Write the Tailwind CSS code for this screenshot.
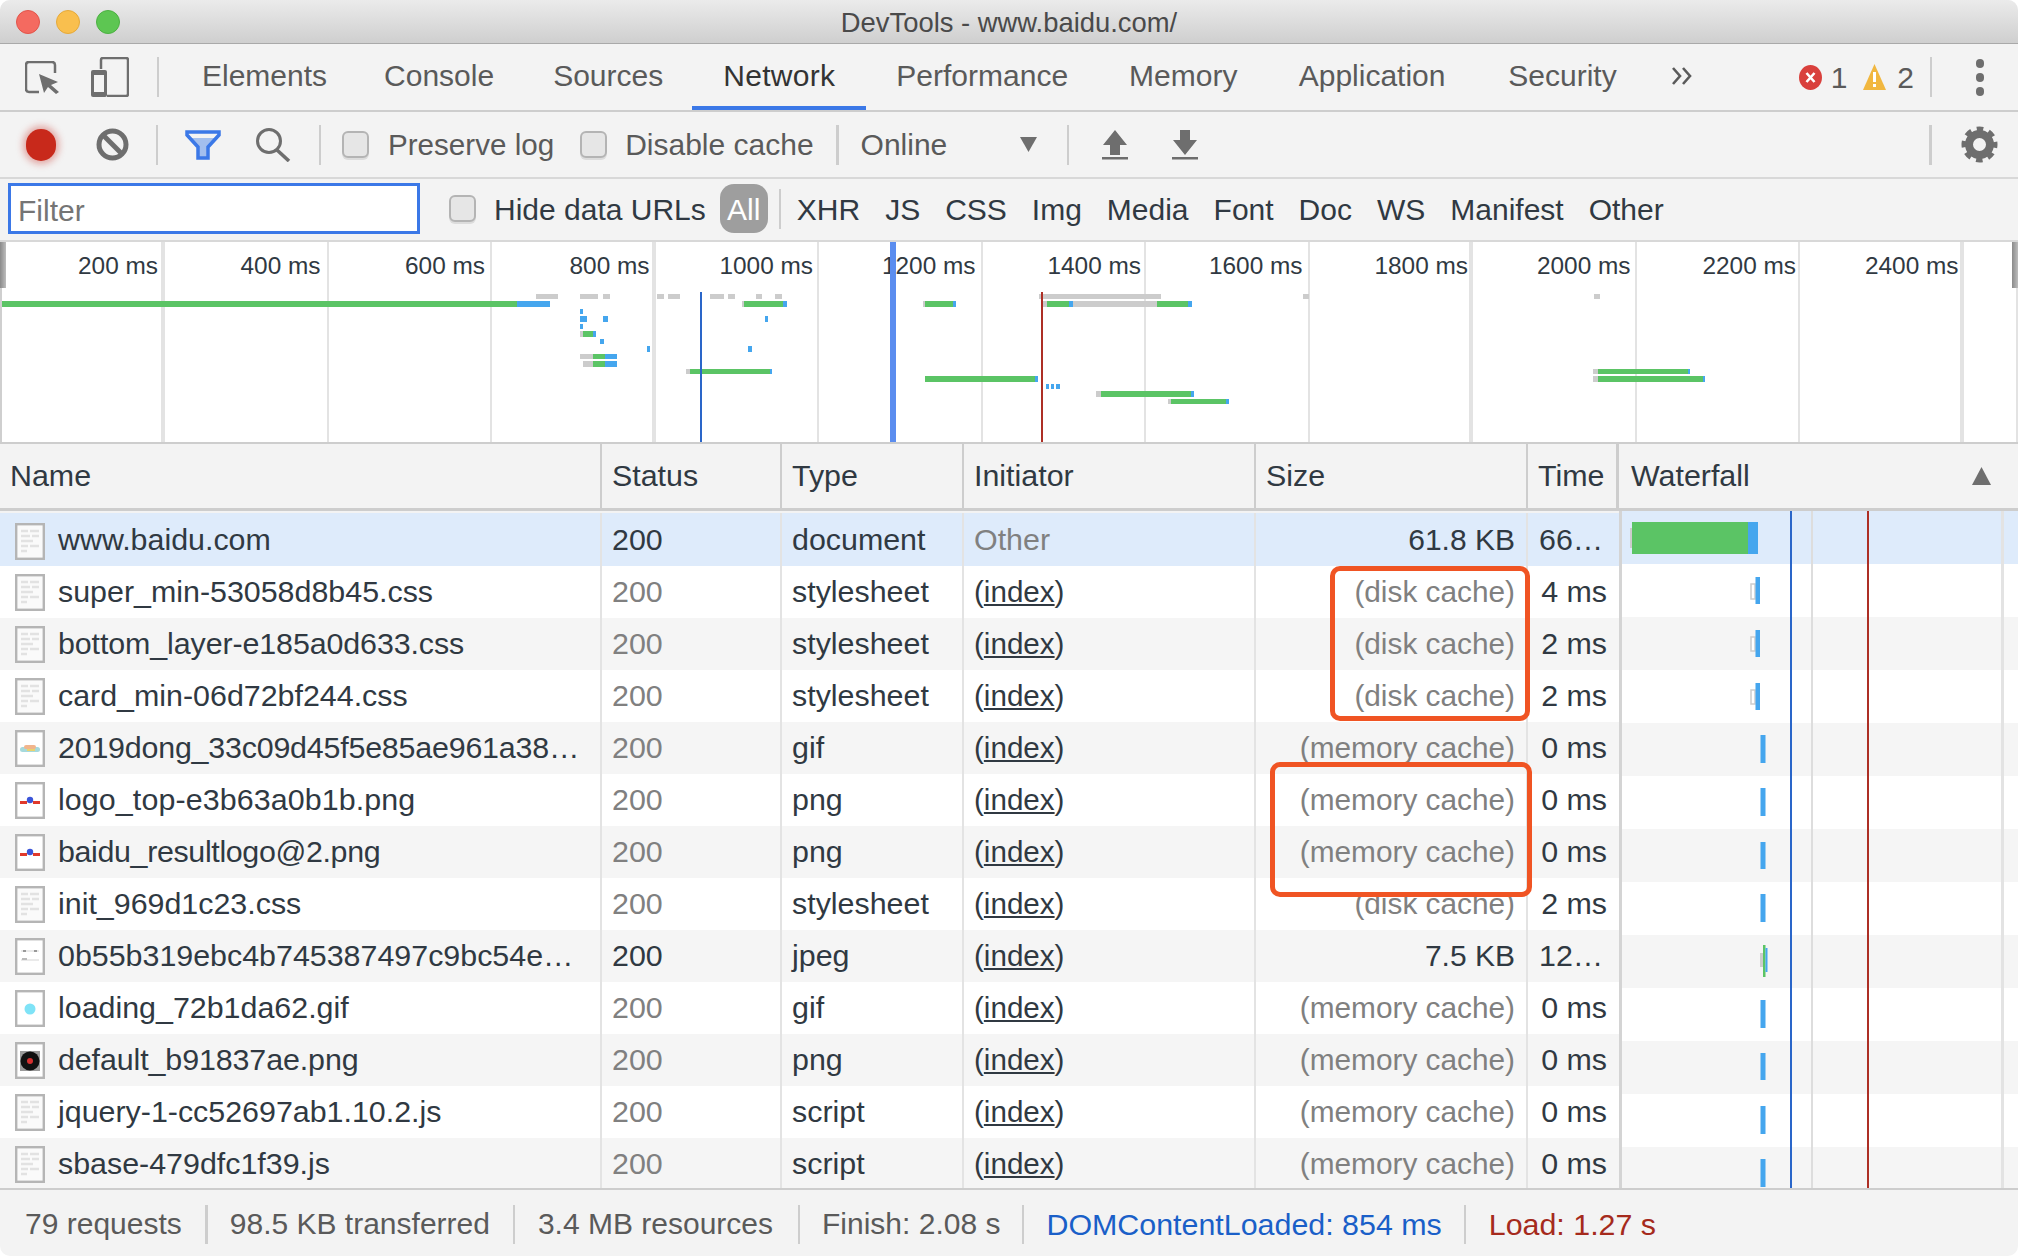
<!DOCTYPE html>
<html lang="en">
<head>
    <meta charset="UTF-8">
    <title>DevTools - www.baidu.com/</title>
    <script src="https://cdn.jsdelivr.net/npm/@tailwindcss/browser@4"></script>
</head>
<body class="bg-white">
<div class="relative w-[2018px] h-[1256px] flex flex-col overflow-hidden rounded-[10px] bg-[#f3f3f3] font-['Liberation_Sans',Arial,sans-serif] text-[30.4px] leading-none text-[#303942]">

    <!-- title bar -->
    <header class="relative h-[44px] shrink-0 flex items-center justify-center pt-[2px] bg-gradient-to-b from-[#ebebeb] to-[#cfcfcf] border-b border-[#a9a9a9]">
        <div class="absolute left-[16px] top-[10px] flex gap-[16px]">
            <div class="w-[24px] h-[24px] rounded-full bg-[#f46a60] border border-[#e2544a]"></div>
            <div class="w-[24px] h-[24px] rounded-full bg-[#f9bf4e] border border-[#e5a93a]"></div>
            <div class="w-[24px] h-[24px] rounded-full bg-[#5dc652] border border-[#4cb042]"></div>
        </div>
        <h1 class="text-[27.4px] text-[#4a4a4a]">DevTools - www.baidu.com/</h1>
    </header>

    <!-- panel tabs -->
    <nav class="h-[68px] shrink-0 flex items-center border-b-2 border-[#cdcdcd] text-[30px] text-[#5a5a5a]">
        <svg class="ml-[25px]" width="35" height="33" viewBox="0 0 35 33">
            <path d="M14 31H4Q1 31 1 28V4Q1 1 4 1H27Q30 1 30 4V12" fill="none" stroke="#6e6e6e" stroke-width="2.5"/>
            <path d="M14 13L33 21 26 24 34 31 31 33 23 26 19 32Z" fill="#6e6e6e"/>
        </svg>
        <svg class="ml-[31px]" width="38" height="40" viewBox="0 0 38 40">
            <path d="M10 12V3Q10 1 12 1H35Q37 1 37 3V37Q37 39 35 39H16" fill="none" stroke="#6e6e6e" stroke-width="2.5"/>
            <rect x="0" y="13" width="16" height="27" rx="2" fill="#6e6e6e"/>
            <rect x="3" y="18" width="10" height="17" fill="#f3f3f3"/>
        </svg>
        <div class="ml-[28px] w-[2px] h-[40px] bg-[#cdcdcd]"></div>
        <div class="ml-[14px] h-full flex">
            <div class="pl-[29px] pr-[28px] pb-[2px] flex items-center">Elements</div>
            <div class="pl-[29px] pr-[30px] pb-[2px] flex items-center">Console</div>
            <div class="pl-[29px] pr-[29px] pb-[2px] flex items-center">Sources</div>
            <div class="pl-[31px] pr-[31px] pt-[2px] flex items-center tracking-[0.3px] text-[#333] border-b-[4px] border-[#3b78e7]">Network</div>
            <div class="pl-[30px] pr-[31px] pb-[2px] flex items-center">Performance</div>
            <div class="pl-[30px] pr-[31.3px] pb-[2px] flex items-center">Memory</div>
            <div class="pl-[30px] pr-[33.8px] pb-[2px] flex items-center">Application</div>
            <div class="px-[29px] pb-[2px] flex items-center">Security</div>
        </div>
        <svg class="ml-[25px] mb-[2px]" width="21" height="20" viewBox="0 0 21 20">
            <path d="M2 2L9 10 2 18M12 2L19 10 12 18" fill="none" stroke="#5a5a5a" stroke-width="2.6"/>
        </svg>
        <div class="ml-auto flex items-center">
            <svg width="23" height="25" viewBox="0 0 23 25">
                <ellipse cx="11.5" cy="12.5" rx="11.5" ry="12.5" fill="#d9403c"/>
                <path d="M7.5 8L15.5 17M15.5 8L7.5 17" stroke="#fff" stroke-width="2.6"/>
            </svg>
            <span class="ml-[9px] pt-[2px]">1</span>
            <svg class="ml-[16px]" width="23" height="26" viewBox="0 0 23 26">
                <path d="M11.5 0L23 26H0Z" fill="#f1b73f"/>
                <rect x="10" y="8" width="3" height="10" fill="#fff"/>
                <rect x="10" y="20" width="3" height="3" fill="#fff"/>
            </svg>
            <span class="ml-[11px] pt-[2px]">2</span>
            <div class="ml-[16px] w-[2px] h-[40px] bg-[#cdcdcd]"></div>
            <div class="ml-[44px] mr-[34px] flex flex-col gap-[5px]">
                <div class="w-[8px] h-[9px] rounded-full bg-[#6e6e6e]"></div>
                <div class="w-[8px] h-[9px] rounded-full bg-[#6e6e6e]"></div>
                <div class="w-[8px] h-[9px] rounded-full bg-[#6e6e6e]"></div>
            </div>
        </div>
    </nav>

    <!-- network toolbar -->
    <div class="h-[67px] shrink-0 flex items-center border-b-2 border-[#d8d8d8] text-[30px] text-[#5a5a5a]">
        <div class="ml-[26px] w-[30px] h-[32px] rounded-full bg-[#c8291b] shadow-[0_0_7px_3px_rgba(200,50,40,0.4)]"></div>
        <svg class="ml-[40px]" width="33" height="33" viewBox="0 0 33 33">
            <circle cx="16.5" cy="16.5" r="13.5" fill="none" stroke="#6e6e6e" stroke-width="5"/>
            <path d="M7 7L26 26" stroke="#6e6e6e" stroke-width="5"/>
        </svg>
        <div class="ml-[27px] w-[2px] h-[40px] bg-[#cdcdcd]"></div>
        <svg class="ml-[27px]" width="36" height="30" viewBox="0 0 36 30">
            <path d="M6 8H30L22 18V27H14V18Z" fill="#a3bfee"/>
            <path d="M2 2H34V5L23 17V28H13V17L2 5Z" fill="none" stroke="#3b78e7" stroke-width="3.5"/>
        </svg>
        <svg class="ml-[34px]" width="36" height="34" viewBox="0 0 36 34">
            <circle cx="14" cy="13" r="11.5" fill="none" stroke="#6e6e6e" stroke-width="3"/>
            <path d="M22 22L34 33" stroke="#6e6e6e" stroke-width="3.6"/>
        </svg>
        <div class="ml-[28px] w-[2px] h-[40px] bg-[#cdcdcd]"></div>
        <div class="ml-[21px] w-[27px] h-[27px] rounded-[6px] bg-[#e6e6e6] border-2 border-[#b4b4b4] shadow-[0_2px_0_#dcdcdc]"></div>
        <span class="ml-[19px] text-[29.6px]">Preserve log</span>
        <div class="ml-[26px] w-[27px] h-[27px] rounded-[6px] bg-[#e6e6e6] border-2 border-[#b4b4b4] shadow-[0_2px_0_#dcdcdc]"></div>
        <span class="ml-[18px]">Disable cache</span>
        <div class="ml-[22px] w-[3px] h-[40px] bg-[#cdcdcd]"></div>
        <span class="ml-[22px]">Online</span>
        <svg class="ml-[73px]" width="17" height="15" viewBox="0 0 17 15"><path d="M0 0H17L8.5 15Z" fill="#6e6e6e"/></svg>
        <div class="ml-[30px] w-[2px] h-[40px] bg-[#cdcdcd]"></div>
        <svg class="ml-[33px]" width="26" height="30" viewBox="0 0 26 30">
            <path d="M13 0L25 15H18V25H8V15H1Z" fill="#6e6e6e"/>
            <rect x="0" y="27" width="26" height="2.5" fill="#6e6e6e"/>
        </svg>
        <svg class="ml-[44px]" width="26" height="30" viewBox="0 0 26 30">
            <path d="M8 0H18V10H25L13 25 1 10H8Z" fill="#6e6e6e"/>
            <rect x="0" y="27" width="26" height="2.5" fill="#6e6e6e"/>
        </svg>
        <div class="ml-auto w-[3px] h-[40px] bg-[#cdcdcd]"></div>
        <svg class="ml-[29px] mr-[20px]" width="37" height="37" viewBox="0 0 37 37">
            <circle cx="18.5" cy="18.5" r="10.5" fill="none" stroke="#6e6e6e" stroke-width="8"/>
            <circle cx="18.5" cy="18.5" r="15.5" fill="none" stroke="#6e6e6e" stroke-width="5" stroke-dasharray="6.5 5.67" stroke-dashoffset="3.2"/>
        </svg>
    </div>

    <!-- filter bar -->
    <div class="h-[63px] shrink-0 flex items-center border-b-2 border-[#d8d8d8] pb-[2px] text-[30px]">
        <div class="ml-[8px] w-[412px] h-[51px] bg-white border-[3px] border-[#3b78e7] flex items-center pl-[7px] pt-[5px] text-[#757575]">Filter</div>
        <div class="ml-[29px] w-[27px] h-[27px] rounded-[6px] bg-[#e6e6e6] border-2 border-[#b4b4b4] shadow-[0_2px_0_#dcdcdc]"></div>
        <span class="ml-[18px] pt-[2px]">Hide data URLs</span>
        <div class="ml-[14px] w-[48px] h-[49px] rounded-[14px] bg-[#9e9e9e] text-white flex items-center justify-center pt-[2px]">All</div>
        <div class="ml-[11px] w-[2px] h-[40px] bg-[#cdcdcd]"></div>
        <div class="ml-[16px] flex gap-[25px] pt-[2px]">
            <span>XHR</span><span>JS</span><span>CSS</span><span>Img</span><span>Media</span><span>Font</span><span>Doc</span><span>WS</span><span>Manifest</span><span>Other</span>
        </div>
    </div>

    <!-- timeline overview -->
    <section class="relative h-[202px] shrink-0 bg-white border-b-2 border-[#cdcdcd]">
        <div class="h-full flex text-[24.4px] text-[#303942]">
            <div class="w-[165px] h-full border-r-4 border-[#e3e3e3] pt-[12px] pr-[3px] text-right">200 ms</div>
            <div class="w-[163.5px] h-full border-r-2 border-[#e3e3e3] pt-[12px] pr-[6px] text-right">400 ms</div>
            <div class="w-[163.5px] h-full border-r-2 border-[#e3e3e3] pt-[12px] pr-[5px] text-right">600 ms</div>
            <div class="w-[163.5px] h-full border-r-4 border-[#e3e3e3] pt-[12px] pr-[2px] text-right">800 ms</div>
            <div class="w-[163.5px] h-full border-r-2 border-[#e3e3e3] pt-[12px] pr-[4px] text-right">1000 ms</div>
            <div class="w-[163.5px] h-full border-r-2 border-[#e3e3e3] pt-[12px] pr-[5px] text-right">1200 ms</div>
            <div class="w-[163.5px] h-full border-r-2 border-[#e3e3e3] pt-[12px] pr-[3px] text-right">1400 ms</div>
            <div class="w-[163.5px] h-full border-r-2 border-[#e3e3e3] pt-[12px] pr-[5px] text-right">1600 ms</div>
            <div class="w-[163.5px] h-full border-r-4 border-[#e3e3e3] pt-[12px] pr-[1px] text-right">1800 ms</div>
            <div class="w-[163.5px] h-full border-r-2 border-[#e3e3e3] pt-[12px] pr-[4px] text-right">2000 ms</div>
            <div class="w-[163.5px] h-full border-r-2 border-[#e3e3e3] pt-[12px] pr-[2px] text-right">2200 ms</div>
            <div class="w-[163.5px] h-full border-r-4 border-[#e3e3e3] pt-[12px] pr-[1px] text-right">2400 ms</div>
        </div>
        <svg class="absolute left-0 top-0" width="2018" height="200" viewBox="0 242 2018 200">
            <defs><linearGradient id="handle" x1="0" x2="1" y1="0" y2="0"><stop offset="0" stop-color="#8a8a8a"/><stop offset="1" stop-color="#bdbdbd"/></linearGradient></defs>
            <rect x="0" y="242" width="2" height="200" fill="#cfcfcf"/>
            <rect x="0" y="242" width="6" height="46" fill="url(#handle)"/>
            <rect x="2012" y="242" width="6" height="46" fill="url(#handle)"/>
            <rect x="2016" y="288" width="2" height="154" fill="#e3e3e3"/>
            <g fill="#cccccc">
                <rect x="536" y="294" width="22" height="5"/><rect x="580" y="294" width="18" height="5"/><rect x="603" y="294" width="7" height="5"/>
                <rect x="657" y="294" width="7" height="5"/><rect x="668" y="294" width="12" height="5"/><rect x="710" y="294" width="14" height="5"/>
                <rect x="728" y="294" width="7" height="5"/><rect x="756" y="294" width="6" height="5"/><rect x="775" y="294" width="7" height="5"/>
                <rect x="1039" y="294" width="122" height="5"/><rect x="1303" y="294" width="6" height="5"/><rect x="1594" y="294" width="6" height="5"/>
                <rect x="742" y="301" width="2" height="6"/><rect x="923" y="301" width="2" height="6"/><rect x="1042" y="301" width="5" height="6"/><rect x="1073" y="301" width="84" height="6"/>
                <rect x="580" y="331" width="3" height="6"/>
                <rect x="580" y="354" width="13" height="5"/><rect x="583" y="361" width="10" height="6"/>
                <rect x="686" y="369" width="4" height="5"/><rect x="1593" y="369" width="5" height="5"/><rect x="1593" y="376" width="5" height="6"/>
                <rect x="1096" y="391" width="5" height="6"/><rect x="1168" y="399" width="3" height="5"/>
            </g>
            <g fill="#5bc465">
                <rect x="2" y="301" width="515" height="6"/><rect x="744" y="301" width="39" height="6"/><rect x="925" y="301" width="28" height="6"/>
                <rect x="1047" y="301" width="22" height="6"/><rect x="1157" y="301" width="31" height="6"/>
                <rect x="583" y="331" width="10" height="6"/><rect x="593" y="354" width="12" height="5"/><rect x="593" y="361" width="12" height="6"/>
                <rect x="690" y="369" width="80" height="5"/><rect x="1598" y="369" width="90" height="5"/>
                <rect x="925" y="376" width="110" height="6"/><rect x="1598" y="376" width="105" height="6"/>
                <rect x="1101" y="391" width="90" height="6"/><rect x="1171" y="399" width="55" height="5"/>
            </g>
            <g fill="#45a6ee">
                <rect x="517" y="301" width="33" height="6"/><rect x="783" y="301" width="4" height="6"/><rect x="953" y="301" width="3" height="6"/>
                <rect x="1069" y="301" width="4" height="6"/><rect x="1188" y="301" width="4" height="6"/>
                <rect x="580" y="309" width="3" height="5"/>
                <rect x="580" y="316" width="7" height="6"/><rect x="603" y="316" width="5" height="6"/><rect x="765" y="316" width="3" height="6"/>
                <rect x="580" y="324" width="3" height="5"/><rect x="593" y="331" width="3" height="6"/>
                <rect x="600" y="339" width="4" height="5"/><rect x="647" y="346" width="3" height="6"/><rect x="748" y="346" width="4" height="6"/>
                <rect x="605" y="354" width="12" height="5"/><rect x="605" y="361" width="12" height="6"/>
                <rect x="770" y="369" width="2" height="5"/><rect x="1688" y="369" width="2" height="5"/>
                <rect x="1035" y="376" width="3" height="6"/><rect x="1703" y="376" width="2" height="6"/>
                <rect x="1046" y="384" width="3" height="5"/><rect x="1051" y="384" width="3" height="5"/><rect x="1056" y="384" width="4" height="5"/>
                <rect x="1191" y="391" width="3" height="6"/><rect x="1226" y="399" width="3" height="5"/>
            </g>
            <rect x="700" y="292" width="2" height="150" fill="#2a66c9"/>
            <rect x="890" y="242" width="6" height="200" fill="#5b8def"/>
            <rect x="1041" y="292" width="2" height="150" fill="#ad2f25"/>
        </svg>
    </section>

    <!-- table header -->
    <div class="h-[67px] shrink-0 flex border-b-[3px] border-[#cdcdcd] [&>div]:pb-[2px]">
        <div class="w-[602px] h-full flex items-center pl-[10px] border-r-2 border-[#cdcdcd]">Name</div>
        <div class="w-[180px] h-full flex items-center pl-[10px] border-r-2 border-[#cdcdcd]">Status</div>
        <div class="w-[182px] h-full flex items-center pl-[10px] border-r-2 border-[#cdcdcd]">Type</div>
        <div class="w-[292px] h-full flex items-center pl-[10px] border-r-2 border-[#cdcdcd]">Initiator</div>
        <div class="w-[272px] h-full flex items-center pl-[10px] border-r-2 border-[#cdcdcd]">Size</div>
        <div class="w-[91px] h-full flex items-center pl-[10px] border-r-[3px] border-[#cdcdcd]">Time</div>
        <div class="flex-1 h-full flex items-center pl-[12px]">Waterfall</div>
        <svg class="self-center mr-[27px]" width="19" height="18" viewBox="0 0 19 18"><path d="M9.5 0L19 18H0Z" fill="#6e6e6e"/></svg>
    </div>

    <!-- requests -->
    <div class="h-[677px] shrink-0 flex overflow-hidden">
        <div class="w-[1619px] shrink-0 pt-[2px]">

            <div class="h-[53px] flex items-center bg-[#deebfb]">
                <div class="w-[602px] h-full flex items-center pl-[15px] gap-[13px] border-r-2 border-[#e3e3e3]">
                    <svg class="mt-[3px]" width="30" height="37" viewBox="0 0 30 37"><rect x="1.2" y="1.2" width="27.6" height="34.6" fill="#fafafa" stroke="#b5b5b5" stroke-width="2.4"/><path d="M6 8h7M15 8h9M6 13h9M17 13h7M6 18h12M6 23h7M15 23h9M6 28h6" stroke="#e2e2e2" stroke-width="2.4"/></svg>
                    <span>www.baidu.com</span>
                </div>
                <div class="w-[180px] h-full flex items-center pl-[10px] border-r-2 border-[#e3e3e3]">200</div>
                <div class="w-[182px] h-full flex items-center pl-[10px] border-r-2 border-[#e3e3e3]">document</div>
                <div class="w-[292px] h-full flex items-center pl-[10px] border-r-2 border-[#e3e3e3] text-[#808080]">Other</div>
                <div class="w-[272px] h-full flex items-center justify-end pr-[11px] border-r-2 border-[#e3e3e3] text-[30px]">61.8 KB</div>
                <div class="w-[91px] h-full flex items-center pl-[11px]">66…</div>
            </div>

            <div class="h-[52px] flex items-center bg-white [&>div]:pb-[2px]">
                <div class="w-[602px] h-full flex items-center pl-[15px] gap-[13px] border-r-2 border-[#e3e3e3]">
                    <svg class="mt-[3px]" width="30" height="37" viewBox="0 0 30 37"><rect x="1.2" y="1.2" width="27.6" height="34.6" fill="#fafafa" stroke="#b5b5b5" stroke-width="2.4"/><path d="M6 8h7M15 8h9M6 13h9M17 13h7M6 18h12M6 23h7M15 23h9M6 28h6" stroke="#e2e2e2" stroke-width="2.4"/></svg>
                    <span>super_min-53058d8b45.css</span>
                </div>
                <div class="w-[180px] h-full flex items-center pl-[10px] border-r-2 border-[#e3e3e3] text-[#808080]">200</div>
                <div class="w-[182px] h-full flex items-center pl-[10px] border-r-2 border-[#e3e3e3]">stylesheet</div>
                <div class="w-[292px] h-full flex items-center pl-[10px] pt-[2px] border-r-2 border-[#e3e3e3] text-[29.6px]">(<span class="underline">index</span>)</div>
                <div class="w-[272px] h-full flex items-center justify-end pr-[11px] pt-[2px] border-r-2 border-[#e3e3e3] text-[29.8px] text-[#808080]">(disk cache)</div>
                <div class="w-[91px] h-full flex items-center justify-end pr-[12px]">4 ms</div>
            </div>

            <div class="h-[52px] flex items-center bg-[#f5f5f5] [&>div]:pb-[2px]">
                <div class="w-[602px] h-full flex items-center pl-[15px] gap-[13px] border-r-2 border-[#e3e3e3]">
                    <svg class="mt-[3px]" width="30" height="37" viewBox="0 0 30 37"><rect x="1.2" y="1.2" width="27.6" height="34.6" fill="#fafafa" stroke="#b5b5b5" stroke-width="2.4"/><path d="M6 8h7M15 8h9M6 13h9M17 13h7M6 18h12M6 23h7M15 23h9M6 28h6" stroke="#e2e2e2" stroke-width="2.4"/></svg>
                    <span class="tracking-[-0.1px]">bottom_layer-e185a0d633.css</span>
                </div>
                <div class="w-[180px] h-full flex items-center pl-[10px] border-r-2 border-[#e3e3e3] text-[#808080]">200</div>
                <div class="w-[182px] h-full flex items-center pl-[10px] border-r-2 border-[#e3e3e3]">stylesheet</div>
                <div class="w-[292px] h-full flex items-center pl-[10px] pt-[2px] border-r-2 border-[#e3e3e3] text-[29.6px]">(<span class="underline">index</span>)</div>
                <div class="w-[272px] h-full flex items-center justify-end pr-[11px] pt-[2px] border-r-2 border-[#e3e3e3] text-[29.8px] text-[#808080]">(disk cache)</div>
                <div class="w-[91px] h-full flex items-center justify-end pr-[12px]">2 ms</div>
            </div>

            <div class="h-[52px] flex items-center bg-white [&>div]:pb-[2px]">
                <div class="w-[602px] h-full flex items-center pl-[15px] gap-[13px] border-r-2 border-[#e3e3e3]">
                    <svg class="mt-[3px]" width="30" height="37" viewBox="0 0 30 37"><rect x="1.2" y="1.2" width="27.6" height="34.6" fill="#fafafa" stroke="#b5b5b5" stroke-width="2.4"/><path d="M6 8h7M15 8h9M6 13h9M17 13h7M6 18h12M6 23h7M15 23h9M6 28h6" stroke="#e2e2e2" stroke-width="2.4"/></svg>
                    <span>card_min-06d72bf244.css</span>
                </div>
                <div class="w-[180px] h-full flex items-center pl-[10px] border-r-2 border-[#e3e3e3] text-[#808080]">200</div>
                <div class="w-[182px] h-full flex items-center pl-[10px] border-r-2 border-[#e3e3e3]">stylesheet</div>
                <div class="w-[292px] h-full flex items-center pl-[10px] pt-[2px] border-r-2 border-[#e3e3e3] text-[29.6px]">(<span class="underline">index</span>)</div>
                <div class="w-[272px] h-full flex items-center justify-end pr-[11px] pt-[2px] border-r-2 border-[#e3e3e3] text-[29.8px] text-[#808080]">(disk cache)</div>
                <div class="w-[91px] h-full flex items-center justify-end pr-[12px]">2 ms</div>
            </div>

            <div class="h-[52px] flex items-center bg-[#f5f5f5] [&>div]:pb-[2px]">
                <div class="w-[602px] h-full flex items-center pl-[15px] gap-[13px] border-r-2 border-[#e3e3e3]">
                    <svg class="mt-[3px]" width="30" height="37" viewBox="0 0 30 37"><rect x="1.2" y="1.2" width="27.6" height="34.6" fill="#fff" stroke="#b5b5b5" stroke-width="2.4"/><rect x="5" y="17" width="20" height="5" rx="2.5" fill="#a6d9dc"/><rect x="9" y="15" width="12" height="4" rx="2" fill="#f2b58c"/><rect x="12" y="19" width="8" height="2" fill="#e9d36f"/></svg>
                    <span class="tracking-[-0.2px]">2019dong_33c09d45f5e85ae961a38…</span>
                </div>
                <div class="w-[180px] h-full flex items-center pl-[10px] border-r-2 border-[#e3e3e3] text-[#808080]">200</div>
                <div class="w-[182px] h-full flex items-center pl-[10px] border-r-2 border-[#e3e3e3]">gif</div>
                <div class="w-[292px] h-full flex items-center pl-[10px] pt-[2px] border-r-2 border-[#e3e3e3] text-[29.6px]">(<span class="underline">index</span>)</div>
                <div class="w-[272px] h-full flex items-center justify-end pr-[11px] pt-[2px] border-r-2 border-[#e3e3e3] text-[29.8px] text-[#808080]">(memory cache)</div>
                <div class="w-[91px] h-full flex items-center justify-end pr-[12px]">0 ms</div>
            </div>

            <div class="h-[52px] flex items-center bg-white [&>div]:pb-[2px]">
                <div class="w-[602px] h-full flex items-center pl-[15px] gap-[13px] border-r-2 border-[#e3e3e3]">
                    <svg class="mt-[3px]" width="30" height="37" viewBox="0 0 30 37"><rect x="1.2" y="1.2" width="27.6" height="34.6" fill="#fff" stroke="#b5b5b5" stroke-width="2.4"/><rect x="5" y="19" width="7" height="3" fill="#e0392b"/><rect x="18" y="19" width="7" height="3" fill="#e0392b"/><circle cx="15" cy="18" r="3.2" fill="#3b55d9"/></svg>
                    <span class="tracking-[0.1px]">logo_top-e3b63a0b1b.png</span>
                </div>
                <div class="w-[180px] h-full flex items-center pl-[10px] border-r-2 border-[#e3e3e3] text-[#808080]">200</div>
                <div class="w-[182px] h-full flex items-center pl-[10px] border-r-2 border-[#e3e3e3]">png</div>
                <div class="w-[292px] h-full flex items-center pl-[10px] pt-[2px] border-r-2 border-[#e3e3e3] text-[29.6px]">(<span class="underline">index</span>)</div>
                <div class="w-[272px] h-full flex items-center justify-end pr-[11px] pt-[2px] border-r-2 border-[#e3e3e3] text-[29.8px] text-[#808080]">(memory cache)</div>
                <div class="w-[91px] h-full flex items-center justify-end pr-[12px]">0 ms</div>
            </div>

            <div class="h-[52px] flex items-center bg-[#f5f5f5] [&>div]:pb-[2px]">
                <div class="w-[602px] h-full flex items-center pl-[15px] gap-[13px] border-r-2 border-[#e3e3e3]">
                    <svg class="mt-[3px]" width="30" height="37" viewBox="0 0 30 37"><rect x="1.2" y="1.2" width="27.6" height="34.6" fill="#fff" stroke="#b5b5b5" stroke-width="2.4"/><rect x="5" y="19" width="7" height="3" fill="#e0392b"/><rect x="18" y="19" width="7" height="3" fill="#e0392b"/><circle cx="15" cy="18" r="3.2" fill="#3b55d9"/></svg>
                    <span class="tracking-[-0.35px]">baidu_resultlogo@2.png</span>
                </div>
                <div class="w-[180px] h-full flex items-center pl-[10px] border-r-2 border-[#e3e3e3] text-[#808080]">200</div>
                <div class="w-[182px] h-full flex items-center pl-[10px] border-r-2 border-[#e3e3e3]">png</div>
                <div class="w-[292px] h-full flex items-center pl-[10px] pt-[2px] border-r-2 border-[#e3e3e3] text-[29.6px]">(<span class="underline">index</span>)</div>
                <div class="w-[272px] h-full flex items-center justify-end pr-[11px] pt-[2px] border-r-2 border-[#e3e3e3] text-[29.8px] text-[#808080]">(memory cache)</div>
                <div class="w-[91px] h-full flex items-center justify-end pr-[12px]">0 ms</div>
            </div>

            <div class="h-[52px] flex items-center bg-white [&>div]:pb-[2px]">
                <div class="w-[602px] h-full flex items-center pl-[15px] gap-[13px] border-r-2 border-[#e3e3e3]">
                    <svg class="mt-[3px]" width="30" height="37" viewBox="0 0 30 37"><rect x="1.2" y="1.2" width="27.6" height="34.6" fill="#fafafa" stroke="#b5b5b5" stroke-width="2.4"/><path d="M6 8h7M15 8h9M6 13h9M17 13h7M6 18h12M6 23h7M15 23h9M6 28h6" stroke="#e2e2e2" stroke-width="2.4"/></svg>
                    <span>init_969d1c23.css</span>
                </div>
                <div class="w-[180px] h-full flex items-center pl-[10px] border-r-2 border-[#e3e3e3] text-[#808080]">200</div>
                <div class="w-[182px] h-full flex items-center pl-[10px] border-r-2 border-[#e3e3e3]">stylesheet</div>
                <div class="w-[292px] h-full flex items-center pl-[10px] pt-[2px] border-r-2 border-[#e3e3e3] text-[29.6px]">(<span class="underline">index</span>)</div>
                <div class="w-[272px] h-full flex items-center justify-end pr-[11px] pt-[2px] border-r-2 border-[#e3e3e3] text-[29.8px] text-[#808080]">(disk cache)</div>
                <div class="w-[91px] h-full flex items-center justify-end pr-[12px]">2 ms</div>
            </div>

            <div class="h-[52px] flex items-center bg-[#f5f5f5] [&>div]:pb-[2px]">
                <div class="w-[602px] h-full flex items-center pl-[15px] gap-[13px] border-r-2 border-[#e3e3e3]">
                    <svg class="mt-[3px]" width="30" height="37" viewBox="0 0 30 37"><rect x="1.2" y="1.2" width="27.6" height="34.6" fill="#fff" stroke="#b5b5b5" stroke-width="2.4"/><path d="M6 13h18M6 22h18" stroke="#e4e4e4" stroke-width="1.5"/><rect x="8" y="12" width="3" height="2" fill="#999"/><rect x="19" y="12" width="3" height="2" fill="#999"/><rect x="7" y="20" width="5" height="2" fill="#bbb"/></svg>
                    <span>0b55b319ebc4b745387497c9bc54e…</span>
                </div>
                <div class="w-[180px] h-full flex items-center pl-[10px] border-r-2 border-[#e3e3e3]">200</div>
                <div class="w-[182px] h-full flex items-center pl-[10px] border-r-2 border-[#e3e3e3]">jpeg</div>
                <div class="w-[292px] h-full flex items-center pl-[10px] pt-[2px] border-r-2 border-[#e3e3e3] text-[29.6px]">(<span class="underline">index</span>)</div>
                <div class="w-[272px] h-full flex items-center justify-end pr-[11px] pt-[2px] border-r-2 border-[#e3e3e3] text-[30px]">7.5 KB</div>
                <div class="w-[91px] h-full flex items-center pl-[11px]">12…</div>
            </div>

            <div class="h-[52px] flex items-center bg-white [&>div]:pb-[2px]">
                <div class="w-[602px] h-full flex items-center pl-[15px] gap-[13px] border-r-2 border-[#e3e3e3]">
                    <svg class="mt-[3px]" width="30" height="37" viewBox="0 0 30 37"><rect x="1.2" y="1.2" width="27.6" height="34.6" fill="#fff" stroke="#b5b5b5" stroke-width="2.4"/><circle cx="15" cy="19" r="5.5" fill="#7fe3f7"/></svg>
                    <span>loading_72b1da62.gif</span>
                </div>
                <div class="w-[180px] h-full flex items-center pl-[10px] border-r-2 border-[#e3e3e3] text-[#808080]">200</div>
                <div class="w-[182px] h-full flex items-center pl-[10px] border-r-2 border-[#e3e3e3]">gif</div>
                <div class="w-[292px] h-full flex items-center pl-[10px] pt-[2px] border-r-2 border-[#e3e3e3] text-[29.6px]">(<span class="underline">index</span>)</div>
                <div class="w-[272px] h-full flex items-center justify-end pr-[11px] pt-[2px] border-r-2 border-[#e3e3e3] text-[29.8px] text-[#808080]">(memory cache)</div>
                <div class="w-[91px] h-full flex items-center justify-end pr-[12px]">0 ms</div>
            </div>

            <div class="h-[52px] flex items-center bg-[#f5f5f5] [&>div]:pb-[2px]">
                <div class="w-[602px] h-full flex items-center pl-[15px] gap-[13px] border-r-2 border-[#e3e3e3]">
                    <svg class="mt-[3px]" width="30" height="37" viewBox="0 0 30 37"><rect x="1.2" y="1.2" width="27.6" height="34.6" fill="#fff" stroke="#b5b5b5" stroke-width="2.4"/><rect x="5" y="9" width="20" height="20" fill="#9a9a9a"/><circle cx="15" cy="19" r="9.5" fill="#111"/><circle cx="15" cy="19" r="3" fill="#d63030"/></svg>
                    <span class="tracking-[-0.1px]">default_b91837ae.png</span>
                </div>
                <div class="w-[180px] h-full flex items-center pl-[10px] border-r-2 border-[#e3e3e3] text-[#808080]">200</div>
                <div class="w-[182px] h-full flex items-center pl-[10px] border-r-2 border-[#e3e3e3]">png</div>
                <div class="w-[292px] h-full flex items-center pl-[10px] pt-[2px] border-r-2 border-[#e3e3e3] text-[29.6px]">(<span class="underline">index</span>)</div>
                <div class="w-[272px] h-full flex items-center justify-end pr-[11px] pt-[2px] border-r-2 border-[#e3e3e3] text-[29.8px] text-[#808080]">(memory cache)</div>
                <div class="w-[91px] h-full flex items-center justify-end pr-[12px]">0 ms</div>
            </div>

            <div class="h-[52px] flex items-center bg-white [&>div]:pb-[2px]">
                <div class="w-[602px] h-full flex items-center pl-[15px] gap-[13px] border-r-2 border-[#e3e3e3]">
                    <svg class="mt-[3px]" width="30" height="37" viewBox="0 0 30 37"><rect x="1.2" y="1.2" width="27.6" height="34.6" fill="#fafafa" stroke="#b5b5b5" stroke-width="2.4"/><path d="M6 8h7M15 8h9M6 13h9M17 13h7M6 18h12M6 23h7M15 23h9M6 28h6" stroke="#e2e2e2" stroke-width="2.4"/></svg>
                    <span>jquery-1-cc52697ab1.10.2.js</span>
                </div>
                <div class="w-[180px] h-full flex items-center pl-[10px] border-r-2 border-[#e3e3e3] text-[#808080]">200</div>
                <div class="w-[182px] h-full flex items-center pl-[10px] border-r-2 border-[#e3e3e3]">script</div>
                <div class="w-[292px] h-full flex items-center pl-[10px] pt-[2px] border-r-2 border-[#e3e3e3] text-[29.6px]">(<span class="underline">index</span>)</div>
                <div class="w-[272px] h-full flex items-center justify-end pr-[11px] pt-[2px] border-r-2 border-[#e3e3e3] text-[29.8px] text-[#808080]">(memory cache)</div>
                <div class="w-[91px] h-full flex items-center justify-end pr-[12px]">0 ms</div>
            </div>

            <div class="h-[52px] flex items-center bg-[#f5f5f5] [&>div]:pb-[2px]">
                <div class="w-[602px] h-full flex items-center pl-[15px] gap-[13px] border-r-2 border-[#e3e3e3]">
                    <svg class="mt-[3px]" width="30" height="37" viewBox="0 0 30 37"><rect x="1.2" y="1.2" width="27.6" height="34.6" fill="#fafafa" stroke="#b5b5b5" stroke-width="2.4"/><path d="M6 8h7M15 8h9M6 13h9M17 13h7M6 18h12M6 23h7M15 23h9M6 28h6" stroke="#e2e2e2" stroke-width="2.4"/></svg>
                    <span>sbase-479dfc1f39.js</span>
                </div>
                <div class="w-[180px] h-full flex items-center pl-[10px] border-r-2 border-[#e3e3e3] text-[#808080]">200</div>
                <div class="w-[182px] h-full flex items-center pl-[10px] border-r-2 border-[#e3e3e3]">script</div>
                <div class="w-[292px] h-full flex items-center pl-[10px] pt-[2px] border-r-2 border-[#e3e3e3] text-[29.6px]">(<span class="underline">index</span>)</div>
                <div class="w-[272px] h-full flex items-center justify-end pr-[11px] pt-[2px] border-r-2 border-[#e3e3e3] text-[29.8px] text-[#808080]">(memory cache)</div>
                <div class="w-[91px] h-full flex items-center justify-end pr-[12px]">0 ms</div>
            </div>
        </div>

        <!-- waterfall -->
        <div class="relative flex-1 border-l-[3px] border-[#d4d4d4]">
            <div class="h-[53px] bg-[#deebfb]"></div>
            <div class="h-[53px] bg-white"></div>
            <div class="h-[53px] bg-[#f5f5f5]"></div>
            <div class="h-[53px] bg-white"></div>
            <div class="h-[53px] bg-[#f5f5f5]"></div>
            <div class="h-[53px] bg-white"></div>
            <div class="h-[53px] bg-[#f5f5f5]"></div>
            <div class="h-[53px] bg-white"></div>
            <div class="h-[53px] bg-[#f5f5f5]"></div>
            <div class="h-[53px] bg-white"></div>
            <div class="h-[53px] bg-[#f5f5f5]"></div>
            <div class="h-[53px] bg-white"></div>
            <div class="h-[53px] bg-[#f5f5f5]"></div>
            <svg class="absolute left-0 top-0" width="396" height="677" viewBox="1622 511 396 677">
                <rect x="1811" y="511" width="2" height="677" fill="#dddddd"/>
                <rect x="2001" y="511" width="3" height="677" fill="#e3e3e3"/>
                <rect x="1630" y="528" width="2" height="20" fill="#cccccc"/>
                <rect x="1632" y="522" width="116" height="32" fill="#5bc465"/>
                <rect x="1748" y="522" width="10" height="32" fill="#45a6ee"/>
                <rect x="1751" y="584" width="4" height="15" fill="#fff" stroke="#cccccc" stroke-width="1.5"/>
                <rect x="1751" y="637" width="4" height="14" fill="#fff" stroke="#cccccc" stroke-width="1.5"/>
                <rect x="1751" y="690" width="4" height="14" fill="#fff" stroke="#cccccc" stroke-width="1.5"/>
                <g fill="#45a6ee">
                    <rect x="1755.5" y="577" width="4.5" height="27"/><rect x="1755.5" y="630" width="4.5" height="27"/><rect x="1755.5" y="683" width="4.5" height="27"/>
                    <rect x="1760.5" y="735" width="5" height="28"/><rect x="1760.5" y="788" width="5" height="28"/><rect x="1760.5" y="842" width="5" height="27"/>
                    <rect x="1760.5" y="894" width="5" height="28"/><rect x="1760.5" y="1000" width="5" height="28"/><rect x="1760.5" y="1053" width="5" height="27"/>
                    <rect x="1760.5" y="1106" width="5" height="28"/><rect x="1760.5" y="1159" width="5" height="28"/>
                </g>
                <rect x="1760" y="953" width="3" height="14" fill="#cccccc"/>
                <rect x="1763" y="945" width="2.5" height="32" fill="#5bc465"/>
                <rect x="1765.5" y="948" width="2" height="24" fill="#45a6ee"/>
                <rect x="1790" y="511" width="2" height="677" fill="#2a66c9"/>
                <rect x="1867" y="511" width="2" height="677" fill="#ad2f25"/>
            </svg>
        </div>
    </div>

    <!-- status bar -->
    <footer class="flex-1 flex items-center pt-[2px] border-t-2 border-[#cdcdcd] text-[30px] text-[#5a5a5a]">
        <span class="pl-[25px] pr-[23px]">79 requests</span>
        <div class="w-[3px] h-[39px] bg-[#cdcdcd]"></div>
        <span class="pl-[22px] pr-[23px]">98.5 KB transferred</span>
        <div class="w-[2px] h-[39px] bg-[#cdcdcd]"></div>
        <span class="pl-[23px] pr-[25px]">3.4 MB resources</span>
        <div class="w-[2px] h-[39px] bg-[#cdcdcd]"></div>
        <span class="px-[22px]">Finish: 2.08 s</span>
        <div class="w-[2px] h-[39px] bg-[#cdcdcd]"></div>
        <span class="px-[22px] text-[30.4px] text-[#1a5fc8]">DOMContentLoaded: 854 ms</span>
        <div class="w-[2px] h-[39px] bg-[#cdcdcd]"></div>
        <span class="px-[23px] text-[30.4px] text-[#a52a1c]">Load: 1.27 s</span>
    </footer>

    <!-- hand-drawn annotation boxes from the screenshot -->
    <div class="absolute left-[1330px] top-[566px] w-[200px] h-[155px] rounded-[10px] border-[5px] border-[#f05423]"></div>
    <div class="absolute left-[1270px] top-[762px] w-[262px] h-[135px] rounded-[10px] border-[5px] border-[#f05423]"></div>
</div>
</body>
</html>
